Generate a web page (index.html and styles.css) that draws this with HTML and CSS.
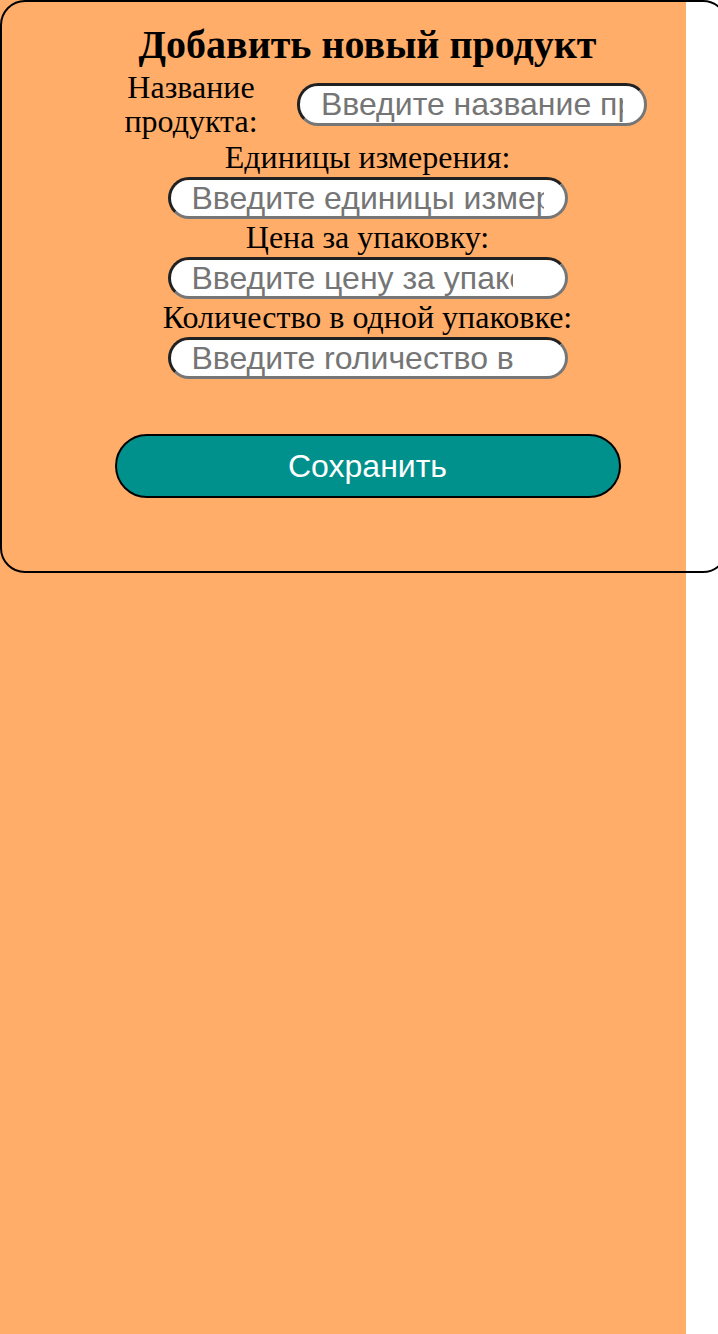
FILE: index.html
```html
<!DOCTYPE html>
<html lang="ru">
<head>
<meta charset="utf-8">
<title>Добавить новый продукт</title>
<link rel="stylesheet" href="styles.css">
</head>
<body>
<div class="page">
  <form class="card">
    <h1 class="title">Добавить новый продукт</h1>
    <div class="row">
      <label class="label label-side" for="name">Название продукта:</label>
      <input class="field field-name" id="name" type="text" placeholder="Введите название продукта">
    </div>
    <label class="label" for="unit">Единицы измерения:</label>
    <input class="field" id="unit" type="text" placeholder="Введите единицы измерения">
    <label class="label" for="price">Цена за упаковку:</label>
    <input class="field field-num" id="price" type="text" placeholder="Введите цену за упаковку">
    <label class="label" for="qty">Количество в одной упаковке:</label>
    <input class="field field-num" id="qty" type="text" placeholder="Введите rоличество в упаковке">
    <button class="save" type="button">Сохранить</button>
  </form>
</div>
</body>
</html>
```

FILE: styles.css
```css
html, body {
  margin: 0;
  padding: 0;
  background: #ffffff;
}

.page {
  width: 686px;
  min-height: 1334px;
  background: #ffad69;
}

.card {
  box-sizing: border-box;
  width: 728px;
  height: 573px;
  border: 2px solid #000;
  border-radius: 25px;
  padding: 20px 0 0 7px;
  display: flex;
  flex-direction: column;
  align-items: center;
  font-family: "Liberation Serif", "Times New Roman", serif;
}

.title {
  margin: 0 0 2px;
  font-size: 40px;
  font-weight: bold;
  line-height: 46px;
  text-align: center;
  white-space: nowrap;
}

.row {
  display: flex;
  align-items: center;
  gap: 31px;
  margin-left: 28px;
  margin-bottom: 2px;
}

.label {
  font-size: 32px;
  line-height: 34px;
  text-align: center;
  white-space: nowrap;
}

.label-side {
  width: 150px;
  white-space: normal;
}

.field {
  box-sizing: border-box;
  width: 400px;
  height: 42px;
  margin: 3px 0 1px;
  padding: 0 21px;
  border: 3px inset #767676;
  border-radius: 21px;
  background: #fff;
  font-family: "Liberation Sans", Arial, sans-serif;
  font-size: 32px;
  color: #000;
  outline: none;
}

.field::placeholder {
  color: #757575;
}

.field-name {
  width: 350px;
  height: 43px;
  margin: 0;
}

.field-num {
  padding-right: 52px;
}

.save {
  box-sizing: border-box;
  width: 506px;
  height: 64px;
  margin-top: 54px;
  border: 2px solid #000;
  border-radius: 32px;
  background: #00918c;
  color: #fff;
  font-family: "Liberation Sans", Arial, sans-serif;
  font-size: 32px;
  cursor: pointer;
}
```
